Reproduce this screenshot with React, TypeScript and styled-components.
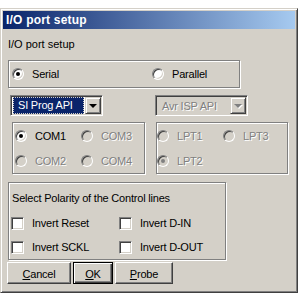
import React from "react";
import styled, { createGlobalStyle } from "styled-components";

const face = "#d4d0c8";
const shadow = "#808080";
const darkShadow = "#404040";
const highlight = "#ffffff";

const GlobalStyle = createGlobalStyle`
  html, body {
    margin: 0;
    padding: 0;
    background: #fff;
  }
  body {
    font-family: "Liberation Sans", Arial, sans-serif;
    font-size: 11px;
    letter-spacing: -0.2px;
    color: #000;
  }
`;

const Page = styled.div`
  width: 301px;
  height: 299px;
  padding-top: 8px;
  box-sizing: border-box;
`;

const Window = styled.div`
  width: 298px;
  height: 285px;
  box-sizing: border-box;
  background: ${face};
  border: 1px solid;
  border-color: ${face} ${darkShadow} ${darkShadow} ${face};
  box-shadow: inset 1px 1px ${highlight}, inset -1px -1px ${shadow};
  padding: 2px;
  display: flex;
  flex-direction: column;
`;

const TitleBar = styled.div`
  height: 18px;
  line-height: 18px;
  padding-left: 3px;
  background: linear-gradient(to right, #0a246a, #a6caf0);
  color: #fff;
  font-weight: bold;
  font-size: 12px;
  letter-spacing: 0.2px;
`;

const Content = styled.div`
  display: flex;
  flex-direction: column;
  align-items: flex-start;
  padding-left: 5px;
`;

const Caption = styled.div`
  margin-top: 9px;
  line-height: 13px;
  letter-spacing: 0;
`;

const GroupBox = styled.div<{ $w: number; $h: number }>`
  width: ${(p) => p.$w}px;
  height: ${(p) => p.$h}px;
  box-sizing: border-box;
  border: 1px solid ${shadow};
  box-shadow: inset 1px 1px ${highlight}, 1px 1px ${highlight};
`;

const ModeGroup = styled(GroupBox)`
  margin-top: 9px;
  display: flex;
  align-items: center;
  padding-left: 3px;
`;

const ModeCell = styled.div`
  flex: none;
  width: 140px;
  display: flex;
`;

const Option = styled.label<{ $disabled?: boolean }>`
  display: flex;
  align-items: center;
  gap: 8px;
  line-height: 13px;
  color: ${(p) => (p.$disabled ? shadow : "#000")};
  text-shadow: ${(p) => (p.$disabled ? `1px 1px 0 ${highlight}` : "none")};
`;

const RadioCircle = styled.span<{ $checked?: boolean; $disabled?: boolean }>`
  position: relative;
  flex: none;
  width: 12px;
  height: 12px;
  box-sizing: border-box;
  border-radius: 50%;
  border: 1px solid;
  border-color: ${shadow} ${highlight} ${highlight} ${shadow};
  box-shadow: inset 1px 1px ${darkShadow}, inset -1px -1px ${face};
  background: ${(p) => (p.$disabled ? face : "#fff")};
  &::after {
    content: "";
    display: ${(p) => (p.$checked ? "block" : "none")};
    position: absolute;
    left: 3px;
    top: 3px;
    width: 4px;
    height: 4px;
    border-radius: 50%;
    background: ${(p) => (p.$disabled ? shadow : "#000")};
  }
`;

const CheckSquare = styled.span`
  flex: none;
  width: 13px;
  height: 13px;
  box-sizing: border-box;
  border: 1px solid;
  border-color: ${shadow} ${highlight} ${highlight} ${shadow};
  box-shadow: inset 1px 1px ${darkShadow}, inset -1px -1px ${face};
  background: #fff;
`;

const ComboRow = styled.div`
  margin-top: 7px;
  margin-left: 2px;
  display: flex;
  gap: 52px;
`;

const Combo = styled.div<{ $disabled?: boolean }>`
  width: 93px;
  height: 21px;
  box-sizing: border-box;
  border: 1px solid;
  border-color: ${shadow} ${highlight} ${highlight} ${shadow};
  box-shadow: inset 1px 1px ${darkShadow}, inset -1px -1px ${face};
  padding: 1px;
  display: flex;
  background: ${(p) => (p.$disabled ? face : "#fff")};
`;

const ComboValue = styled.div<{ $selected?: boolean; $disabled?: boolean }>`
  flex: 1;
  margin: 0 1px 0 1px;
  padding-left: ${(p) => (p.$selected ? 4 : 3)}px;
  line-height: ${(p) => (p.$selected ? 15 : 17)}px;
  background: ${(p) => (p.$selected ? "#0a246a" : "transparent")};
  color: ${(p) => (p.$disabled ? shadow : p.$selected ? "#fff" : "#000")};
  text-shadow: ${(p) => (p.$disabled ? `1px 1px 0 ${highlight}` : "none")};
  border: 1px dotted ${(p) => (p.$selected ? "#d4d0c8" : "transparent")};
  white-space: nowrap;
  overflow: hidden;
`;

const ComboButton = styled.div`
  width: 16px;
  height: 17px;
  box-sizing: border-box;
  background: ${face};
  border: 1px solid;
  border-color: ${face} ${darkShadow} ${darkShadow} ${face};
  box-shadow: inset 1px 1px ${highlight}, inset -1px -1px ${shadow};
  display: flex;
  align-items: center;
  justify-content: center;
`;

const Arrow = styled.span<{ $disabled?: boolean }>`
  width: 0;
  height: 0;
  border-left: 4px solid transparent;
  border-right: 4px solid transparent;
  border-top: 4px solid ${(p) => (p.$disabled ? shadow : "#000")};
  filter: ${(p) => (p.$disabled ? `drop-shadow(1px 1px 0 ${highlight})` : "none")};
`;

const PortRow = styled.div`
  margin-top: 6px;
  margin-left: 4px;
  display: flex;
  gap: 11px;
`;

const PortGroup = styled(GroupBox)<{ $pad: number }>`
  display: grid;
  grid-template-columns: 66px 66px;
  grid-auto-rows: 12px;
  row-gap: 13px;
  padding: 7px 0 0 ${(p) => p.$pad}px;
  align-content: start;
`;

const PolarityGroup = styled(GroupBox)`
  margin-top: 8px;
  padding: 9px 0 0 2px;
  display: flex;
  flex-direction: column;
`;

const PolarityTitle = styled.div`
  line-height: 13px;
  margin-left: 1px;
`;

const CheckGrid = styled.div`
  margin-top: 12px;
  display: grid;
  grid-template-columns: 108px 100px;
  grid-auto-rows: 13px;
  row-gap: 11px;
`;

const ButtonRow = styled.div`
  margin-top: 2px;
  margin-left: -1px;
  display: flex;
  gap: 2px;
`;

const Button = styled.button<{ $w: number; $default?: boolean }>`
  width: ${(p) => p.$w}px;
  height: 22px;
  box-sizing: border-box;
  margin: 0;
  padding: 2px 0 0;
  font: inherit;
  letter-spacing: inherit;
  color: #000;
  background: ${face};
  border: 1px solid;
  border-color: ${(p) =>
    p.$default ? "#000" : `${highlight} ${darkShadow} ${darkShadow} ${highlight}`};
  box-shadow: ${(p) =>
    p.$default
      ? `inset 1px 1px ${highlight}, inset -1px -1px ${darkShadow}, inset -2px -2px ${shadow}`
      : `inset -1px -1px ${shadow}, inset 1px 1px ${face}`};
  u {
    text-decoration: underline;
  }
`;

const Radio = ({
  label,
  checked,
  disabled,
}: {
  label: string;
  checked?: boolean;
  disabled?: boolean;
}) => (
  <Option $disabled={disabled}>
    <RadioCircle $checked={checked} $disabled={disabled} />
    {label}
  </Option>
);

const Check = ({ label }: { label: string }) => (
  <Option>
    <CheckSquare />
    {label}
  </Option>
);

export default function App() {
  return (
    <>
      <GlobalStyle />
      <Page>
        <Window>
          <TitleBar>I/O port setup</TitleBar>
          <Content>
            <Caption>I/O port setup</Caption>
            <ModeGroup $w={232} $h={28}>
              <ModeCell>
                <Radio label="Serial" checked />
              </ModeCell>
              <ModeCell>
                <Radio label="Parallel" />
              </ModeCell>
            </ModeGroup>
            <ComboRow>
              <Combo>
                <ComboValue $selected>SI Prog API</ComboValue>
                <ComboButton>
                  <Arrow />
                </ComboButton>
              </Combo>
              <Combo $disabled>
                <ComboValue $disabled>Avr ISP API</ComboValue>
                <ComboButton>
                  <Arrow $disabled />
                </ComboButton>
              </Combo>
            </ComboRow>
            <PortRow>
              <PortGroup $w={133} $h={52} $pad={2}>
                <Radio label="COM1" checked />
                <Radio label="COM3" disabled />
                <Radio label="COM2" disabled />
                <Radio label="COM4" disabled />
              </PortGroup>
              <PortGroup $w={132} $h={52} $pad={0}>
                <Radio label="LPT1" disabled />
                <Radio label="LPT3" disabled />
                <Radio label="LPT2" checked disabled />
              </PortGroup>
            </PortRow>
            <PolarityGroup $w={218} $h={78}>
              <PolarityTitle>Select Polarity of the Control lines</PolarityTitle>
              <CheckGrid>
                <Check label="Invert Reset" />
                <Check label="Invert D-IN" />
                <Check label="Invert SCKL" />
                <Check label="Invert D-OUT" />
              </CheckGrid>
            </PolarityGroup>
            <ButtonRow>
              <Button $w={64}>
                <u>C</u>ancel
              </Button>
              <Button $w={40} $default>
                <u>O</u>K
              </Button>
              <Button $w={58}>
                <u>P</u>robe
              </Button>
            </ButtonRow>
          </Content>
        </Window>
      </Page>
    </>
  );
}
